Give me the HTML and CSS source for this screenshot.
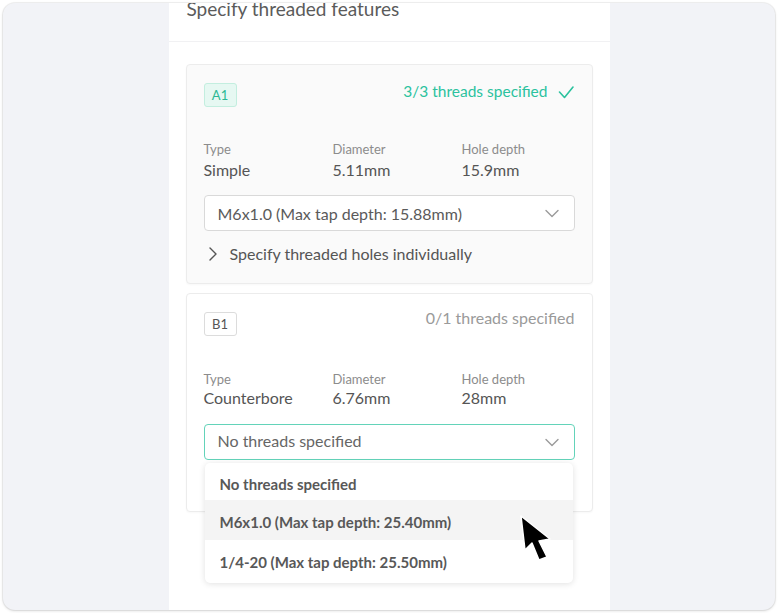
FILE: index.html
```html
<!DOCTYPE html>
<html>
<head>
<meta charset="utf-8">
<link rel="stylesheet" href="styles.css">
</head>
<body>
<div class="frame">
  <div class="panel">
    <div class="panel-head"><h1 class="title">Specify threaded features</h1></div>
    <div class="cards">
      <div class="card card-done">
        <div class="card-top">
          <span class="badge badge-done">A1</span>
          <span class="status status-done">3/3 threads specified
            <svg class="check" width="16" height="14" viewBox="0 0 16 14"><polyline points="1.5,7 6.5,12.5 15,2" fill="none" stroke="#2cc29e" stroke-width="1.6" stroke-linecap="round" stroke-linejoin="round"/></svg>
          </span>
        </div>
        <div class="props">
          <div class="prop"><div class="prop-label">Type</div><div class="prop-value">Simple</div></div>
          <div class="prop"><div class="prop-label">Diameter</div><div class="prop-value">5.11mm</div></div>
          <div class="prop"><div class="prop-label">Hole depth</div><div class="prop-value">15.9mm</div></div>
        </div>
        <div class="select">
          <span>M6x1.0 (Max tap depth: 15.88mm)</span>
          <svg class="chev" width="14" height="9" viewBox="0 0 14 9"><polyline points="1,1.5 7,7.5 13,1.5" fill="none" stroke="#9a9a9a" stroke-width="1.4" stroke-linecap="round" stroke-linejoin="round"/></svg>
        </div>
        <div class="expander">
          <svg class="chev-right" width="10" height="14" viewBox="0 0 10 14"><polyline points="2,1 8,7 2,13" fill="none" stroke="#555" stroke-width="1.4" stroke-linecap="round" stroke-linejoin="round"/></svg>
          <span>Specify threaded holes individually</span>
        </div>
      </div>

      <div class="card">
        <div class="card-top">
          <span class="badge">B1</span>
          <span class="status status-b">0/1 threads specified</span>
        </div>
        <div class="props props-b">
          <div class="prop"><div class="prop-label">Type</div><div class="prop-value">Counterbore</div></div>
          <div class="prop"><div class="prop-label">Diameter</div><div class="prop-value">6.76mm</div></div>
          <div class="prop"><div class="prop-label">Hole depth</div><div class="prop-value">28mm</div></div>
        </div>
        <div class="select-wrap">
          <div class="select select-open">
            <span>No threads specified</span>
            <svg class="chev" width="14" height="9" viewBox="0 0 14 9"><polyline points="1,1.5 7,7.5 13,1.5" fill="none" stroke="#9a9a9a" stroke-width="1.4" stroke-linecap="round" stroke-linejoin="round"/></svg>
          </div>
          <div class="menu">
            <div class="opt opt-first">No threads specified</div>
            <div class="opt opt-hover">M6x1.0 (Max tap depth: 25.40mm)</div>
            <div class="opt opt-last">1/4-20 (Max tap depth: 25.50mm)</div>
            <svg class="cursor" width="40" height="52" viewBox="0 0 40 52"><polygon points="3,3 7,37 14,30 21,47 29,44 21,28 32,26" fill="#000" stroke="#fff" stroke-width="1.5" stroke-linejoin="round"/></svg>
          </div>
        </div>
      </div>
    </div>
  </div>
</div>
</body>
</html>
```

FILE: styles.css
```css
html, body {
  margin: 0;
  padding: 0;
  background: #ffffff;
}
body {
  font-family: Lato, "Open Sans", sans-serif;
  color: #555;
}
.frame {
  margin: 3px;
  width: 772px;
  height: 607px;
  background: #f2f3f7;
  border-radius: 12px;
  overflow: hidden;
  display: flex;
  justify-content: center;
  box-shadow: 0 0 0 1px rgba(0,0,0,0.05), 0 1px 3px rgba(0,0,0,0.14);
}
.panel {
  width: 441px;
  background: #fff;
  display: flex;
  flex-direction: column;
}
.panel-head {
  height: 38px;
  border-bottom: 1px solid #f1f1f3;
  padding-left: 18px;
  overflow: hidden;
}
.title {
  margin: -5px 0 0;
  font-size: 19px;
  line-height: 22px;
  font-weight: 400;
  color: #5b5b5b;
}
.cards {
  padding: 22px 17px 0;
  display: flex;
  flex-direction: column;
  gap: 9px;
}
.card {
  border: 1px solid #ececec;
  border-radius: 4px;
  background: #fff;
  padding: 18px 17px 51px 17px;
  box-shadow: 0 1px 2px rgba(0,0,0,0.03);
}
.card-done {
  background: #fafafa;
  padding-bottom: 19px;
}
.card-top {
  display: flex;
  justify-content: space-between;
  align-items: flex-start;
  height: 24px;
}
.badge {
  box-sizing: border-box;
  height: 24px;
  width: 33px;
  display: flex;
  align-items: center;
  justify-content: center;
  border: 1px solid #dcdcdc;
  border-radius: 3px;
  background: #fff;
  font-size: 13px;
  color: #555;
}
.badge-done {
  background: #e6f8f2;
  border-color: #c3eedf;
  color: #2cb893;
}
.status {
  display: flex;
  align-items: center;
  gap: 10px;
  font-size: 16px;
  line-height: 20px;
  color: #9a9a9a;
  margin-top: -2px;
}
.status-b {
  margin-top: -4px;
}
.status-done {
  font-size: 15.5px;
  color: #2cc29e;
  margin-top: -2px;
  margin-right: 1px;
}
.check {
  margin-top: 2px;
}
.props {
  display: grid;
  grid-template-columns: 129px 129px 1fr;
  margin-top: 34px;
}
.props-b {
  margin-top: 35px;
}
.prop-label {
  font-size: 13px;
  line-height: 16px;
  color: #8c8c8c;
}
.prop-value {
  font-size: 16px;
  line-height: 20px;
  color: #555;
  margin-top: 3px;
}
.props-b .prop-value {
  margin-top: 1px;
}
.select {
  box-sizing: border-box;
  margin-top: 15px;
  height: 36px;
  border: 1px solid #d9d9d9;
  border-radius: 4px;
  background: #fff;
  display: flex;
  align-items: center;
  justify-content: space-between;
  padding: 0 15px 0 13px;
  font-size: 16px;
  color: #5a5a5a;
}
.select-wrap {
  position: relative;
  margin-top: 16px;
}
.select-wrap .select {
  margin-top: 0;
}
.select-open {
  border: 1.5px solid #63d3b9;
  color: #666;
  padding-bottom: 3px;
}
.select-open .chev {
  margin-top: 3px;
}
.expander {
  display: flex;
  align-items: center;
  gap: 12px;
  margin-top: 13px;
  padding-left: 4px;
  font-size: 16px;
  line-height: 20px;
  color: #555;
}
.menu {
  position: absolute;
  top: 39px;
  left: 1px;
  right: 2px;
  background: #fff;
  border-radius: 5px;
  box-shadow: 0 1px 6px rgba(0,0,0,0.12);
  z-index: 5;
}
.opt {
  display: flex;
  align-items: center;
  padding-left: 15px;
  font-size: 15px;
  font-weight: 700;
  color: #585858;
  height: 40px;
}
.opt-first {
  height: 33px;
  padding-top: 4px;
}
.opt-hover {
  background: #f4f4f4;
  padding-top: 3px;
  height: 37px;
}
.opt-last {
  height: 43px;
}
.cursor {
  position: absolute;
  left: 313px;
  top: 50px;
}
```
